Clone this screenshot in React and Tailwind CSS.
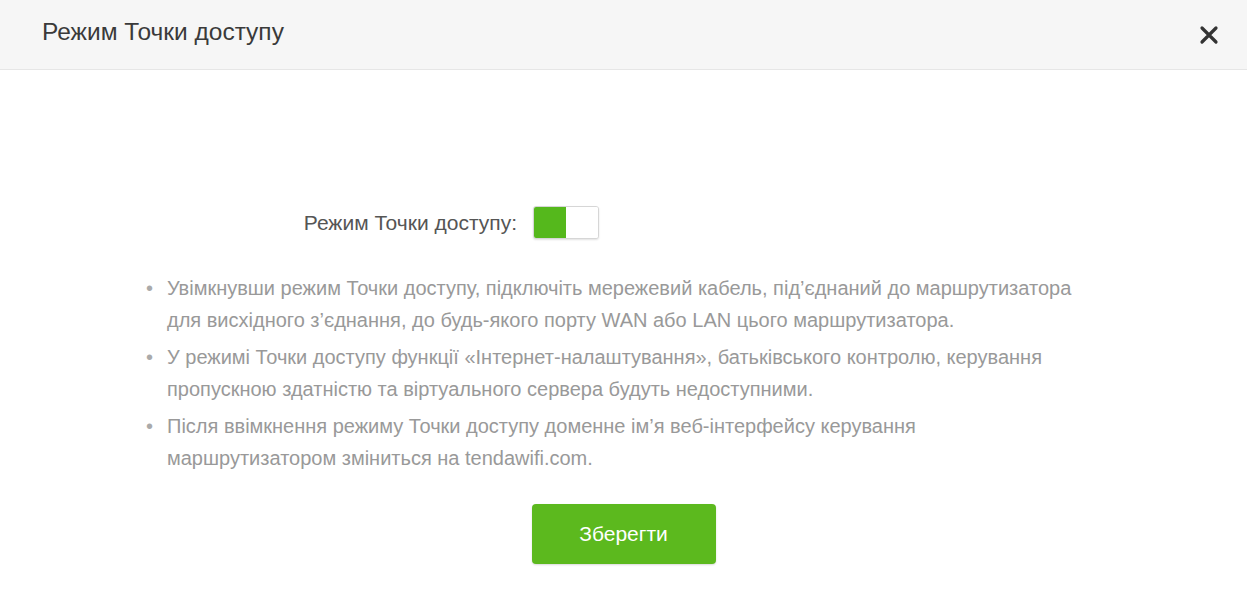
import React, { useState } from 'react';

const notes = [
  ['Увімкнувши режим Точки доступу, підключіть мережевий кабель, під’єднаний до маршрутизатора', 'для висхідного з’єднання, до будь-якого порту WAN або LAN цього маршрутизатора.'],
  ['У режимі Точки доступу функції «Інтернет-налаштування», батьківського контролю, керування', 'пропускною здатністю та віртуального сервера будуть недоступними.'],
  ['Після ввімкнення режиму Точки доступу доменне ім’я веб-інтерфейсу керування', 'маршрутизатором зміниться на tendawifi.com.']
];

export default function App() {
  const [enabled, setEnabled] = useState(true);

  return (
    <div className="w-[1247px] h-[600px] bg-white font-['Liberation_Sans',Arial,sans-serif] overflow-hidden">
      {/* Header */}
      <div className="h-[70px] flex items-center justify-between pl-[42px] pr-[26px] bg-[#f6f6f6] border-b border-[#e6e6e6]">
        <h3 className="text-[24.5px] text-[#3a3a3a] -mt-[4px]">Режим Точки доступу</h3>
        <button aria-label="Закрити" className="w-6 h-6 flex items-center justify-center text-[#333]">
          <svg width="20" height="20" viewBox="0 0 20 20">
            <path d="M3 3 L17 17 M17 3 L3 17" stroke="currentColor" strokeWidth="3.2" strokeLinecap="round" />
          </svg>
        </button>
      </div>

      {/* Body */}
      <div className="pt-[136px] flex flex-col items-center">
        <div className="flex items-center w-[955px]">
          <label className="w-[371px] text-right text-[21px] text-[#555] whitespace-nowrap">Режим Точки доступу:</label>
          <button
            onClick={() => setEnabled(!enabled)}
            className="ml-[16px] w-[66px] h-[33px] rounded-[3px] border border-[#d6d6d6] bg-white flex overflow-hidden shadow-[0_1px_2px_rgba(0,0,0,0.12)]"
          >
            <span className={enabled ? 'w-[32px] h-full bg-[#55b81c]' : 'w-[32px] h-full bg-white'} />
            <span className={enabled ? 'flex-1 h-full bg-white' : 'flex-1 h-full bg-[#ccc]'} />
          </button>
        </div>

        <ul className="w-[955px] mt-[33px] space-y-[5px]">
          {notes.map(([a, b]) => (
            <li key={a} className="flex text-[20px] leading-[32px] text-[#999] whitespace-nowrap">
              <span className="w-[21px] shrink-0 text-[#aaa]">•</span>
              <span>
                {a}
                <br />
                {b}
              </span>
            </li>
          ))}
        </ul>

        <button className="mt-[30px] w-[184px] h-[60px] rounded-[4px] bg-[#5cb91e] text-white text-[21px] shadow-[0_1px_2px_rgba(0,0,0,0.15)]">
          Зберегти
        </button>
      </div>
    </div>
  );
}
